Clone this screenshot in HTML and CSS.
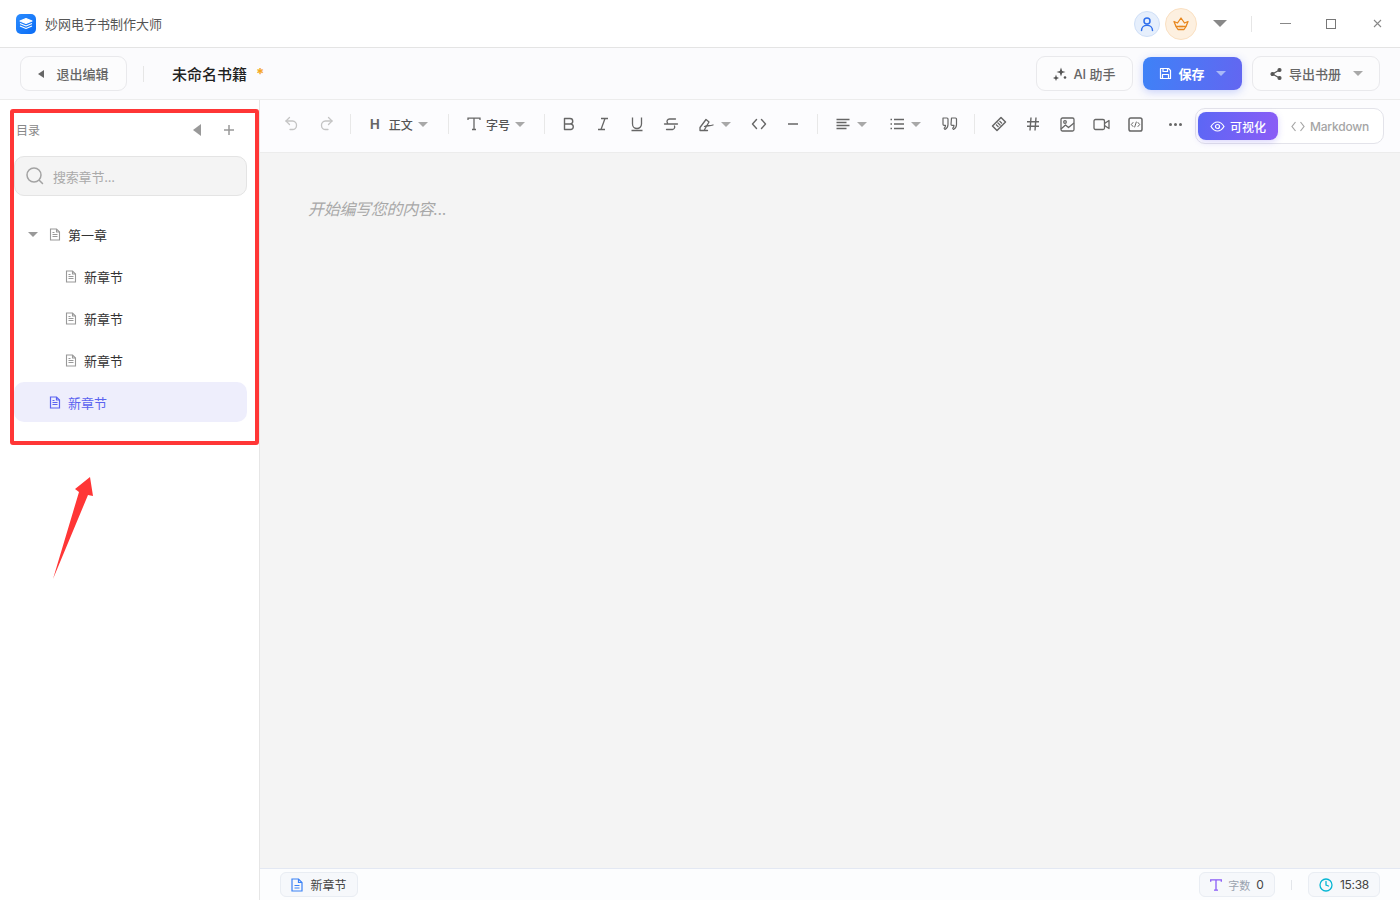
FILE: index.html
```html
<!DOCTYPE html>
<html lang="zh-CN">
<head>
  <meta charset="UTF-8">
  <title>妙网电子书制作大师</title>
  <link rel="stylesheet" href="styles.css">
</head>
<body>
  <div class="app">
    <!-- Title bar -->
    <div class="titlebar">
      <div class="logo">
        <svg width="14" height="14" viewBox="0 0 14 14" fill="none" stroke="#fff" stroke-width="1.1" stroke-linejoin="round"><path d="M7 1.5 13 4 7 6.5 1 4Z" fill="#fff"/><path d="M1 6.5 7 9l6-2.5"/><path d="M1 9l6 2.5L13 9"/></svg>
      </div>
      <span class="app-name">妙网电子书制作大师</span>
      <div class="title-right">
        <div class="avatar avatar-user">
          <svg width="16" height="16" viewBox="0 0 16 16" fill="none" stroke="#2f6fed" stroke-width="1.5" stroke-linecap="round"><circle cx="8" cy="5" r="3"/><path d="M2.5 14.5c0-3.2 2.4-5.2 5.5-5.2s5.500 2 5.500 5.200"/></svg>
        </div>
        <div class="avatar avatar-vip">
          <svg width="16" height="14" viewBox="0 0 16 14" fill="none" stroke="#e8861c" stroke-width="1.3" stroke-linejoin="round"><path d="M1 4.500 4.500 6 8 1l3.500 5L15 4.500 13 9.500H3Z"/><path d="M3 9.500 5 12.500h6L13 9.500"/><path d="M6 9.500h4"/></svg>
        </div>
        <span class="menu-caret"></span>
        <span class="title-sep"></span>
        <div class="win-btn"><span class="win-min"></span></div>
        <div class="win-btn"><span class="win-max"></span></div>
        <div class="win-btn">
          <svg width="9" height="9" viewBox="0 0 9 9" stroke="#888" stroke-width="1.100"><path d="M1 1l7 7M8 1 1 8"/></svg>
        </div>
      </div>
    </div>

    <!-- Book header -->
    <div class="header">
      <button class="btn btn-exit"><span class="arrow-left"></span>退出编辑</button>
      <span class="header-sep"></span>
      <span class="book-name">未命名书籍</span>
      <span class="book-star">*</span>
      <div class="header-right">
        <button class="btn btn-ai">
          <svg width="14" height="14" viewBox="0 0 14 14" fill="#555"><path d="M8 0.500 9.200 4 12.500 5 9.200 6 8 9.500 6.800 6 3.500 5 6.800 4Z"/><path d="M3 7.500 3.800 10 6 11 3.800 12 3 14 2.200 12 0 11 2.200 10Z"/><circle cx="12" cy="10.500" r="1.300"/></svg>
          AI 助手
        </button>
        <button class="btn btn-save">
          <svg width="13" height="13" viewBox="0 0 13 13" fill="none" stroke="#fff" stroke-width="1.200" stroke-linejoin="round"><path d="M1.500 1.500h8l2 2v8h-10Z"/><path d="M4 1.500v3h4.500v-3M3.500 11.500V7.500h6v4"/></svg>
          保存
          <span class="caret caret-light"></span>
        </button>
        <button class="btn btn-export">
          <svg width="14" height="14" viewBox="0 0 14 14" fill="#555" stroke="#555" stroke-width="1.200"><path d="M10.500 3 3.500 7l7 4" fill="none"/><circle cx="10.500" cy="3" r="1.500"/><circle cx="3.500" cy="7" r="1.500"/><circle cx="10.500" cy="11" r="1.500"/></svg>
          导出书册
          <span class="caret"></span>
        </button>
      </div>
    </div>

    <div class="workspace">
      <!-- Chapter sidebar -->
      <div class="sidebar">
        <div class="side-head">
          <span class="side-title">目录</span>
          <span class="side-collapse"></span>
          <svg class="side-add" width="12" height="12" viewBox="0 0 12 12" stroke="#999" stroke-width="1.500"><path d="M6 1v10M1 6h10"/></svg>
        </div>
        <div class="search">
          <svg width="20" height="20" viewBox="0 0 20 20" fill="none" stroke="#a3a3a3" stroke-width="1.500" stroke-linecap="round"><circle cx="9" cy="9" r="7"/><path d="M14.500 14.500 17.500 17.500"/></svg>
          <span>搜索章节...</span>
        </div>
        <div class="tree">
          <div class="tree-row">
            <span class="tree-caret"></span>
            <svg class="doc" width="12" height="13" viewBox="0 0 12 13" fill="none" stroke="#999" stroke-width="1.100"><path d="M1.500 1h6l3 3v8h-9Z"/><path d="M7.500 1v3h3M3.500 6.500h5M3.500 8.500h5M3.500 4.500h2"/></svg>
            <span>第一章</span>
          </div>
          <div class="tree-row tree-child">
            <svg class="doc" width="12" height="13" viewBox="0 0 12 13" fill="none" stroke="#999" stroke-width="1.100"><path d="M1.500 1h6l3 3v8h-9Z"/><path d="M7.500 1v3h3M3.500 6.500h5M3.500 8.500h5M3.500 4.500h2"/></svg>
            <span>新章节</span>
          </div>
          <div class="tree-row tree-child">
            <svg class="doc" width="12" height="13" viewBox="0 0 12 13" fill="none" stroke="#999" stroke-width="1.100"><path d="M1.500 1h6l3 3v8h-9Z"/><path d="M7.500 1v3h3M3.500 6.500h5M3.500 8.500h5M3.500 4.500h2"/></svg>
            <span>新章节</span>
          </div>
          <div class="tree-row tree-child">
            <svg class="doc" width="12" height="13" viewBox="0 0 12 13" fill="none" stroke="#999" stroke-width="1.100"><path d="M1.500 1h6l3 3v8h-9Z"/><path d="M7.500 1v3h3M3.500 6.500h5M3.500 8.500h5M3.500 4.500h2"/></svg>
            <span>新章节</span>
          </div>
          <div class="tree-row tree-active">
            <svg class="doc" width="12" height="13" viewBox="0 0 12 13" fill="none" stroke="#5b63f0" stroke-width="1.200"><path d="M1.500 1h6l3 3v8h-9Z"/><path d="M7.500 1v3h3M3.500 6.500h5M3.500 8.500h5M3.500 4.500h2"/></svg>
            <span>新章节</span>
          </div>
        </div>
      </div>

      <div class="main">
        <!-- Editor toolbar -->
        <div class="toolbar">
          <div class="tool tool-off"><svg width="16" height="16" viewBox="0 0 16 16" fill="none" stroke="#c4c4c4" stroke-width="1.300" stroke-linecap="round" stroke-linejoin="round"><path d="M5.500 1.500 2 5l3.500 3.500"/><path d="M2 5h6.500a4 4 0 0 1 4 4.500c0 2.500-2 4-4 4H6"/></svg></div>
          <div class="tool tool-off"><svg width="16" height="16" viewBox="0 0 16 16" fill="none" stroke="#c4c4c4" stroke-width="1.300" stroke-linecap="round" stroke-linejoin="round"><path d="M10.500 1.500 14 5l-3.500 3.500"/><path d="M14 5H7.500a4 4 0 0 0-4 4.500c0 2.500 2 4 4 4H10"/></svg></div>
          <span class="tool-sep"></span>
          <div class="tool-drop tool-drop-h"><b class="tool-h">H</b><span class="tool-label">正文</span><span class="caret"></span></div>
          <span class="tool-sep"></span>
          <div class="tool-drop tool-drop-t">
            <svg width="14" height="14" viewBox="0 0 14 14" fill="none" stroke="#666" stroke-width="1.300"><path d="M1 3V1.200h12V3M7 1.200v11.300M5 12.500h4"/></svg>
            <span class="tool-label">字号</span><span class="caret"></span>
          </div>
          <span class="tool-sep"></span>
          <div class="tool"><svg width="16" height="16" viewBox="0 0 16 16" fill="none" stroke="#666" stroke-width="1.400" stroke-linejoin="round"><path d="M3.500 2.500h5.500a2.700 2.700 0 0 1 0 5.500H3.500ZM3.500 8H10a2.800 2.800 0 0 1 0 5.500H3.500Z"/></svg></div>
          <div class="tool"><svg width="16" height="16" viewBox="0 0 16 16" fill="none" stroke="#666" stroke-width="1.300"><path d="M6 2.500h7M3 13.500h7M10 2.500 6 13.500"/></svg></div>
          <div class="tool"><svg width="16" height="16" viewBox="0 0 16 16" fill="none" stroke="#666" stroke-width="1.300"><path d="M3.500 1.500v6.500a4.500 4.500 0 0 0 9 0V1.500M2.500 14.500h11"/></svg></div>
          <div class="tool"><svg width="16" height="16" viewBox="0 0 16 16" fill="none" stroke="#666" stroke-width="1.300" stroke-linecap="round"><path d="M12.500 3H6.500a2.500 2.500 0 0 0-2 4M1.500 8h13M11.500 10a2.500 2.500 0 0 1-2 3.500H3.500"/></svg></div>
          <div class="tool-drop tool-drop-sm">
            <svg width="15" height="15" viewBox="0 0 15 15" fill="none" stroke="#666" stroke-width="1.300" stroke-linejoin="round" stroke-linecap="round"><path d="M1 13.500h7.500M1 13.500V10.500L7 2.500l3 2.500-5 8.500M5.500 9.500C8 8.500 10.500 9 14 8"/></svg>
            <span class="caret"></span>
          </div>
          <div class="tool"><svg width="16" height="16" viewBox="0 0 16 16" fill="none" stroke="#666" stroke-width="1.400" stroke-linecap="round" stroke-linejoin="round"><path d="M5.500 3.500 1.500 8l4 4.500M10.500 3.500l4 4.500-4 4.500"/></svg></div>
          <div class="tool"><svg width="14" height="14" viewBox="0 0 14 14" stroke="#666" stroke-width="1.500"><path d="M2 7h10"/></svg></div>
          <span class="tool-sep"></span>
          <div class="tool-drop tool-drop-sm">
            <svg width="14" height="12" viewBox="0 0 14 12" stroke="#666" stroke-width="1.300"><path d="M0.500 1.500h13M0.500 4.500h10M0.500 7.500h13M0.500 10.500h10"/></svg>
            <span class="caret"></span>
          </div>
          <div class="tool-drop tool-drop-sm">
            <svg width="14" height="12" viewBox="0 0 14 12" stroke="#666" stroke-width="1.300"><path d="M4 1.500h10M4 6h10M4 10.500h10"/><path d="M0.500 1.500h1.500M0.500 6h1.500M0.500 10.500h1.500"/></svg>
            <span class="caret"></span>
          </div>
          <div class="tool"><svg width="16" height="16" viewBox="0 0 16 16" fill="none" stroke="#666" stroke-width="1.200" stroke-linejoin="round"><path d="M1 2h4a1 1 0 0 1 1 1v5.500c0 2.500-1 4-3 5l-.8-1.200c1-.8 1.300-1.800 1.300-3H2a1 1 0 0 1-1-1Z"/><path d="M9.500 2h4a1 1 0 0 1 1 1v5.500c0 2.500-1 4-3 5l-.8-1.200c1-.8 1.300-1.800 1.300-3h-2a1 1 0 0 1-1-1Z"/></svg></div>
          <span class="tool-sep"></span>
          <div class="tool"><svg width="16" height="16" viewBox="0 0 16 16" fill="none" stroke="#666" stroke-width="1.500" stroke-linejoin="round"><path d="M10 1.500 14.500 6 6 14.500 1.500 10Z"/><path d="M6.500 6.500 9.500 9.500M5 8.500l2.500 2.500M8.500 5l2.500 2.500" stroke-width="1.200"/></svg></div>
          <div class="tool"><svg width="14" height="14" viewBox="0 0 14 14" stroke="#666" stroke-width="1.400"><path d="M1 4.800h12M1 9.200h12M5 0.500l-1 13M10 0.500l-1 13"/></svg></div>
          <div class="tool"><svg width="15" height="15" viewBox="0 0 15 15" fill="none" stroke="#666" stroke-width="1.300" stroke-linejoin="round"><rect x="1" y="1" width="13" height="13" rx="1.500"/><circle cx="5" cy="5" r="1.300"/><path d="M1 12 5.500 8 8.500 10.500 14 6"/></svg></div>
          <div class="tool"><svg width="17" height="13" viewBox="0 0 17 13" fill="none" stroke="#666" stroke-width="1.300" stroke-linejoin="round"><rect x="1" y="1.500" width="10.500" height="10" rx="1.500"/><path d="M11.500 5.500 16 2.500v8L11.500 7.500"/></svg></div>
          <div class="tool"><svg width="15" height="15" viewBox="0 0 15 15" fill="none" stroke="#666" stroke-width="1.300" stroke-linecap="round"><rect x="1" y="1" width="13" height="13" rx="1.800" stroke-width="1.500"/><path d="M5 5.500 3.300 7.500 5 9.500M10 5.500l1.700 2L10 9.500M8.300 5 6.700 10" stroke-width="1"/></svg></div>
          <div class="tool tool-more"><span class="dot"></span><span class="dot"></span><span class="dot"></span></div>
          <div class="mode-switch">
            <div class="mode mode-on">
              <svg width="15" height="11" viewBox="0 0 15 11" fill="none" stroke="#fff" stroke-width="1.200"><path d="M1 5.500C2.800 2.500 5 1 7.500 1s4.700 1.500 6.500 4.500C12.200 8.500 10 10 7.500 10S2.800 8.500 1 5.500Z"/><circle cx="7.500" cy="5.500" r="2"/></svg>
              可视化
            </div>
            <div class="mode mode-off">
              <svg width="14" height="11" viewBox="0 0 14 11" fill="none" stroke="#a5a5a5" stroke-width="1.200"><path d="M4.500 1 1 5.500 4.500 10M9.500 1 13 5.500 9.500 10"/></svg>
              Markdown
            </div>
          </div>
        </div>

        <div class="editor">
          <p class="placeholder">开始编写您的内容...</p>
        </div>

        <!-- Status bar -->
        <div class="statusbar">
          <div class="chip chip-doc">
            <svg width="12" height="14" viewBox="0 0 12 14" fill="none" stroke="#3b82f6" stroke-width="1.200"><path d="M1 1h6.500L11 4.500V13H1Z"/><path d="M7.500 1v3.500H11M3.500 7.500h5M3.500 10h5"/></svg>
            新章节
          </div>
          <div class="status-right">
            <div class="chip chip-count">
              <svg width="12" height="12" viewBox="0 0 12 12" fill="none" stroke="#8b5cf6" stroke-width="1.300"><path d="M0.700 2.800V0.800h10.600v2M6 0.800v10.400M4 11.200h4"/></svg>
              <span class="count-label">字数</span>
              <span>0</span>
            </div>
            <span class="status-sep"></span>
            <div class="chip chip-time">
              <svg width="14" height="14" viewBox="0 0 14 14" fill="none" stroke="#06b6d4" stroke-width="1.300" stroke-linecap="round"><circle cx="7" cy="7" r="6"/><path d="M7 3.500V7l2.500 1"/></svg>
              <span class="time-text">15:38</span>
            </div>
          </div>
        </div>
      </div>
    </div>

    <!-- Red annotation drawn over the screenshot -->
    <div class="mark-box"></div>
    <svg class="mark-arrow" width="44" height="106" viewBox="0 0 44 106"><path d="M38 2 41 21 36 20 1 104 27 17 23 14Z" fill="#ff3636"/></svg>
  </div>
</body>
</html>
```

FILE: styles.css
```css
* {
  margin: 0;
  padding: 0;
  box-sizing: border-box;
  font-family: 'Inter', 'Noto Sans CJK SC', sans-serif;
}

html, body {
  height: 100%;
  overflow: hidden;
}

body {
  background: #fff;
  color: #333;
}

.app {
  position: relative;
  width: 1400px;
  height: 900px;
  display: flex;
  flex-direction: column;
}

/* Title bar */
.titlebar {
  height: 48px;
  flex: none;
  display: flex;
  align-items: center;
  padding-left: 16px;
  background: #fff;
  border-bottom: 1px solid #e4e4e4;
}

.logo {
  width: 20px;
  height: 20px;
  border-radius: 5px;
  background: linear-gradient(135deg, #2b8cff, #0a6cf5);
  display: flex;
  align-items: center;
  justify-content: center;
}

.app-name {
  margin-left: 9px;
  font-size: 13px;
  color: #555;
}

.title-right {
  margin-left: auto;
  display: flex;
  align-items: center;
}

.avatar {
  border-radius: 50%;
  display: flex;
  align-items: center;
  justify-content: center;
}

.avatar-user {
  width: 26px;
  height: 26px;
  background: #e6effc;
  border: 1px solid #cfdff7;
}

.avatar-vip {
  width: 32px;
  height: 32px;
  margin-left: 5px;
  background: #fdf0e0;
  border: 1px solid #fae0c2;
}

.menu-caret {
  width: 0;
  height: 0;
  margin-left: 16px;
  border-left: 7px solid transparent;
  border-right: 7px solid transparent;
  border-top: 7px solid #888;
}

.title-sep {
  width: 1px;
  height: 16px;
  margin-left: 24px;
  background: #e6e6e6;
}

.win-btn {
  width: 46px;
  height: 32px;
  display: flex;
  align-items: center;
  justify-content: center;
}

.title-sep + .win-btn {
  margin-left: 10px;
}

.win-min {
  width: 11px;
  height: 1px;
  background: #888;
}

.win-max {
  width: 10px;
  height: 10px;
  border: 1px solid #777;
}

/* Book header */
.header {
  height: 52px;
  flex: none;
  display: flex;
  align-items: center;
  padding: 0 20px;
  background: #fbfbfd;
  border-bottom: 1px solid #ececec;
}

.btn {
  height: 35px;
  display: flex;
  align-items: center;
  justify-content: center;
  background: #fcfcfd;
  border: 1px solid #e9e9ec;
  border-radius: 9px;
  font-size: 13px;
  font-weight: 500;
  color: #666;
}

.btn-exit {
  width: 107px;
}

.arrow-left {
  width: 0;
  height: 0;
  margin-right: 12px;
  border-top: 4.500px solid transparent;
  border-bottom: 4.500px solid transparent;
  border-right: 6px solid #666;
}

.header-sep {
  width: 1px;
  height: 16px;
  margin-left: 16px;
  background: #e6e6e6;
}

.book-name {
  margin-left: 28px;
  font-size: 15px;
  font-weight: 500;
  color: #222;
}

.book-star {
  margin-left: 9px;
  font-size: 15px;
  font-weight: 700;
  color: #f5a623;
}

.header-right {
  margin-left: auto;
  display: flex;
  align-items: center;
  gap: 10px;
}

.btn-ai {
  width: 97px;
  gap: 6px;
}

.btn-save {
  width: 99px;
  height: 33px;
  gap: 6px;
  border: none;
  border-radius: 8px;
  background: linear-gradient(100deg, #3e82f7, #6366f1);
  box-shadow: 0 2px 8px rgba(80, 110, 245, 0.3);
  color: #fff;
  font-weight: 700;
}

.btn-export {
  width: 128px;
  gap: 6px;
}

.btn-export .caret {
  margin-left: 6px;
}

.btn-save .caret {
  margin-left: 5px;
}

.caret {
  width: 0;
  height: 0;
  border-left: 5px solid transparent;
  border-right: 5px solid transparent;
  border-top: 5px solid #a8a8a8;
}

.caret-light {
  border-top-color: #a9b9f7;
}

/* Main layout */
.workspace {
  flex: 1;
  display: flex;
  min-height: 0;
}

.sidebar {
  width: 260px;
  flex: none;
  padding: 10px 12px 0 14px;
  background: #fff;
  border-right: 1px solid #e6e6e6;
}

.side-head {
  height: 40px;
  display: flex;
  align-items: center;
  padding-left: 2px;
}

.side-title {
  margin-bottom: 2px;
  font-size: 12px;
  color: #888;
}

.side-collapse {
  width: 0;
  height: 0;
  margin-left: 153px;
  border-top: 6px solid transparent;
  border-bottom: 6px solid transparent;
  border-right: 8px solid #999;
}

.side-add {
  margin-left: 22px;
}

.search {
  height: 40px;
  margin-top: 6px;
  display: flex;
  align-items: center;
  gap: 8px;
  padding-left: 10px;
  background: #f4f4f4;
  border: 1px solid #e4e4e4;
  border-radius: 10px;
  font-size: 13px;
  letter-spacing: -0.2px;
  color: #aaa;
}

.tree {
  margin-top: 18px;
  display: flex;
  flex-direction: column;
  gap: 2px;
}

.tree-row {
  height: 40px;
  display: flex;
  align-items: center;
  padding-left: 35px;
  border-radius: 10px;
  font-size: 13px;
  color: #333;
}

.tree-row .doc {
  margin-right: 7px;
}

.tree-caret {
  width: 0;
  height: 0;
  margin-left: -21px;
  margin-right: 11px;
  border-left: 5px solid transparent;
  border-right: 5px solid transparent;
  border-top: 5px solid #999;
}

.tree-child {
  padding-left: 51px;
}

.tree-active {
  background: #eeeefc;
  color: #5b63f0;
}

.main {
  flex: 1;
  min-width: 0;
  display: flex;
  flex-direction: column;
}

/* Toolbar */
.toolbar {
  height: 53px;
  flex: none;
  display: flex;
  align-items: center;
  padding-left: 15px;
  background: #fcfcfe;
  border-bottom: 1px solid #ececec;
}

.tool {
  width: 34px;
  height: 34px;
  flex: none;
  margin-bottom: 4px;
  display: flex;
  align-items: center;
  justify-content: center;
}

.tool-sep {
  width: 1px;
  height: 20px;
  flex: none;
  margin: 0 7px 4px;
  background: #e8e8e8;
}

.tool-drop {
  height: 34px;
  flex: none;
  margin-bottom: 4px;
  display: flex;
  align-items: center;
  color: #555;
}

.tool-drop-h {
  width: 83px;
  padding-left: 12px;
}

.tool-h {
  font-size: 13px;
  color: #666;
}

.tool-drop-t {
  width: 81px;
  padding-left: 11px;
}

.tool-drop-sm {
  width: 54px;
  padding-left: 11px;
}

.tool-drop-sm .caret {
  margin-left: 7px;
}

.tool-label {
  margin-left: 9px;
  margin-right: 5px;
  font-size: 12px;
  font-weight: 500;
}

.tool-drop-t .tool-label {
  margin-left: 5px;
  margin-right: 5px;
}

.tool-more {
  margin-left: 6px;
  gap: 2px;
}

.dot {
  width: 3px;
  height: 3px;
  border-radius: 50%;
  background: #666;
}

.mode-switch {
  width: 189px;
  height: 36px;
  margin-left: 3px;
  flex: none;
  display: flex;
  align-items: center;
  padding-left: 2px;
  background: #fff;
  border: 1px solid #e3e3ea;
  border-radius: 10px;
}

.mode {
  height: 28px;
  display: flex;
  align-items: center;
  gap: 5px;
  font-size: 12px;
}

.mode-on {
  width: 80px;
  justify-content: center;
  background: linear-gradient(100deg, #5b67f5, #8b5cf6);
  border-radius: 8px;
  box-shadow: 0 2px 6px rgba(110, 90, 245, 0.25);
  color: #fff;
  font-weight: 500;
}

.mode-off {
  margin-left: 13px;
  letter-spacing: -0.2px;
  color: #a5a5a5;
  font-weight: 500;
}

/* Editor */
.editor {
  flex: 1;
  padding: 44px 48px;
  background: #f4f4f4;
}

.placeholder {
  font-size: 16px;
  font-style: italic;
  line-height: 24px;
  letter-spacing: -0.3px;
  color: #a8a8a8;
}

/* Status bar */
.statusbar {
  height: 32px;
  flex: none;
  display: flex;
  align-items: center;
  padding: 0 20px;
  background: #fcfdfe;
  border-top: 1px solid #e3e8f3;
}

.status-right {
  margin-left: auto;
  display: flex;
  align-items: center;
}

.chip {
  height: 25px;
  display: flex;
  align-items: center;
  justify-content: center;
  background: #f6f8fb;
  border: 1px solid #e9edf3;
  border-radius: 6px;
  font-size: 12px;
  color: #444;
}

.chip-doc {
  width: 78px;
  gap: 7px;
}

.chip-count {
  width: 76px;
  gap: 6px;
}

.count-label {
  font-size: 11px;
  color: #9aa3af;
}

.chip-time {
  width: 72px;
  gap: 7px;
}

.time-text {
  letter-spacing: -0.3px;
}

.status-sep {
  width: 1px;
  height: 10px;
  margin: 0 16px;
  background: #e3e6ea;
}

/* Annotation */
.mark-box {
  position: absolute;
  left: 10px;
  top: 109px;
  width: 249px;
  height: 336px;
  border: 4px solid #ff3636;
  border-radius: 3px;
}

.mark-arrow {
  position: absolute;
  left: 52px;
  top: 475px;
}
```
